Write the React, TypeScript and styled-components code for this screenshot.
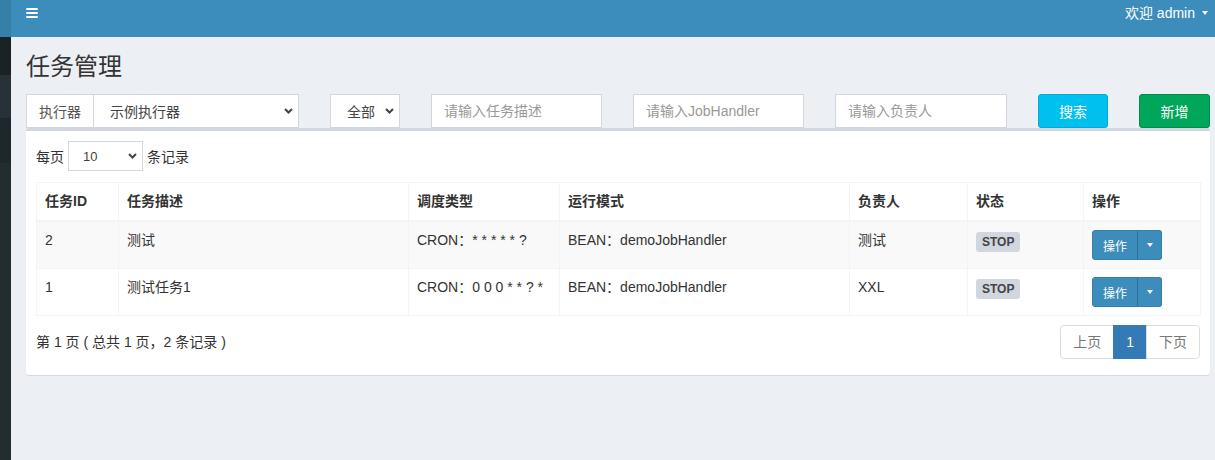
import React from "react";
import styled, { createGlobalStyle } from "styled-components";

const GlobalStyle = createGlobalStyle`
  html, body { margin: 0; padding: 0; }
  body {
    background: #ecf0f5;
    font-family: "Liberation Sans", "Noto Sans CJK SC", sans-serif;
    font-size: 14px;
    color: #333;
  }
  * { box-sizing: border-box; }
`;

const Wrapper = styled.div`
  display: flex;
  min-height: 100vh;
`;

const Sidebar = styled.aside`
  width: 11px;
  flex-shrink: 0;
  display: flex;
  flex-direction: column;
  background: #222d32;
`;

const SideBand = styled.div<{ $h: number; $c: string }>`
  height: ${(p) => p.$h}px;
  background: ${(p) => p.$c};
`;

const Main = styled.div`
  flex: 1;
  display: flex;
  flex-direction: column;
  min-width: 0;
`;

const Navbar = styled.header`
  height: 37px;
  background: #3c8dbc;
  display: flex;
  align-items: flex-start;
  justify-content: space-between;
  padding: 0 7px 0 15px;
  color: #fff;
`;

const Toggle = styled.div`
  display: flex;
  flex-direction: column;
  gap: 2px;
  width: 12px;
  margin-top: 8px;
  span {
    display: block;
    height: 2px;
    background: #fff;
    border-radius: 1px;
  }
`;

const UserMenu = styled.div`
  display: flex;
  align-items: center;
  gap: 7px;
  font-size: 14px;
  line-height: 20px;
  margin-top: 3px;
`;

const Caret = styled.span<{ $color?: string }>`
  display: inline-block;
  width: 0;
  height: 0;
  border-top: 4px solid ${(p) => p.$color || "#fff"};
  border-left: 3px solid transparent;
  border-right: 3px solid transparent;
`;

const Content = styled.main`
  padding: 17px 5px 0 15px;
`;

const Title = styled.h1`
  margin: 0 0 14px;
  font-size: 24px;
  font-weight: 400;
  line-height: 26px;
  color: #333;
`;

const FilterRow = styled.div`
  display: flex;
  gap: 31px;
  height: 34px;
`;

const InputGroup = styled.div<{ $w: number }>`
  display: flex;
  width: ${(p) => p.$w}px;
`;

const Addon = styled.div`
  width: 67px;
  height: 34px;
  border: 1px solid #d2d6de;
  border-right: none;
  background: #fff;
  color: #555;
  display: flex;
  align-items: center;
  justify-content: center;
  font-size: 14px;
`;

const SelectBox = styled.div<{ $w?: number; $h?: number; $pl?: number }>`
  ${(p) => (p.$w ? `width: ${p.$w}px;` : "flex: 1;")}
  height: ${(p) => p.$h || 34}px;
  border: 1px solid #d2d6de;
  background: #fff;
  color: #444;
  display: flex;
  align-items: center;
  justify-content: space-between;
  padding: 0 5px 0 ${(p) => p.$pl ?? 16}px;
  font-size: ${(p) => (p.$h && p.$h < 34 ? 13 : 14)}px;
`;

const TextInput = styled.input<{ $w: number }>`
  width: ${(p) => p.$w}px;
  height: 34px;
  border: 1px solid #d2d6de;
  background: #fff;
  padding: 0 12px;
  font-family: inherit;
  font-size: 14px;
  color: #555;
  outline: none;
  &::placeholder { color: #999; }
`;

const Button = styled.button<{ $bg: string; $border: string; $w?: number }>`
  width: ${(p) => p.$w || 70}px;
  height: 34px;
  border: 1px solid ${(p) => p.$border};
  border-radius: 3px;
  background: ${(p) => p.$bg};
  color: #fff;
  font-family: inherit;
  font-size: 14px;
  padding: 0;
  cursor: pointer;
`;

const Box = styled.section`
  background: #fff;
  border-top: 3px solid #d2d6de;
  border-radius: 3px;
  box-shadow: 0 1px 1px rgba(0, 0, 0, 0.1);
  padding: 10px 10px 16px;
`;

const LengthRow = styled.div`
  display: flex;
  align-items: center;
  gap: 4px;
  height: 30px;
  font-size: 14px;
  color: #333;
`;

const Table = styled.table`
  width: 100%;
  margin-top: 11px;
  border-collapse: collapse;
  table-layout: fixed;
  border: 1px solid #f4f4f4;
  font-size: 14px;
`;

const Th = styled.th<{ $w: number }>`
  width: ${(p) => p.$w}px;
  text-align: left;
  font-weight: 700;
  padding: 8px 8px 9px;
  line-height: 20px;
  border: 1px solid #f4f4f4;
  border-bottom-width: 2px;
  color: #333;
`;

const Tr = styled.tr<{ $striped?: boolean }>`
  background: ${(p) => (p.$striped ? "#f9f9f9" : "#fff")};
`;

const Td = styled.td`
  padding: 8px;
  line-height: 20px;
  vertical-align: top;
  border: 1px solid #f4f4f4;
  color: #333;
  white-space: nowrap;
`;

const Label = styled.span`
  display: inline-block;
  margin-top: 2px;
  padding: 4px 6px;
  font-size: 12px;
  line-height: 12px;
  font-weight: 700;
  color: #444;
  background: #d2d6de;
  border-radius: 3px;
`;

const BtnGroup = styled.div`
  display: inline-flex;
  height: 30px;
`;

const ActionBtn = styled.button`
  height: 30px;
  background: #3c8dbc;
  border: 1px solid #367fa9;
  color: #fff;
  font-family: inherit;
  font-size: 12px;
  padding: 0 10px;
  width: 46px;
  border-radius: 3px 0 0 3px;
`;

const CaretBtn = styled.button`
  height: 30px;
  width: 25px;
  background: #3c8dbc;
  border: 1px solid #367fa9;
  border-left-color: #2f6f96;
  border-radius: 0 3px 3px 0;
  display: flex;
  align-items: center;
  justify-content: center;
  padding: 0;
  margin-left: -1px;
`;

const Footer = styled.div`
  display: flex;
  justify-content: space-between;
  align-items: flex-start;
  margin-top: 9px;
`;

const Info = styled.div`
  padding-top: 7px;
  line-height: 20px;
  font-size: 14px;
  color: #333;
`;

const Pager = styled.div`
  display: flex;
`;

const PageItem = styled.span<{ $active?: boolean; $pos?: "first" | "last" }>`
  padding: 6px 12px;
  line-height: 20px;
  font-size: 14px;
  border: 1px solid ${(p) => (p.$active ? "#337ab7" : "#ddd")};
  background: ${(p) => (p.$active ? "#337ab7" : "#fff")};
  color: ${(p) => (p.$active ? "#fff" : "#777")};
  margin-left: ${(p) => (p.$pos === "first" ? 0 : -1)}px;
  border-radius: ${(p) =>
    p.$pos === "first" ? "4px 0 0 4px" : p.$pos === "last" ? "0 4px 4px 0" : "0"};
`;

const Chevron = () => (
  <svg width="9" height="6" viewBox="0 0 9 6">
    <polyline points="1,1 4.5,4.5 8,1" fill="none" stroke="#444" strokeWidth="2" />
  </svg>
);

const columns = [
  { t: "任务ID", w: 82 },
  { t: "任务描述", w: 290 },
  { t: "调度类型", w: 151 },
  { t: "运行模式", w: 290 },
  { t: "负责人", w: 118 },
  { t: "状态", w: 116 },
  { t: "操作", w: 117 },
];

const rows = [
  { id: "2", desc: "测试", cron: "CRON：* * * * * ?", mode: "BEAN：demoJobHandler", owner: "测试" },
  { id: "1", desc: "测试任务1", cron: "CRON：0 0 0 * * ? *", mode: "BEAN：demoJobHandler", owner: "XXL" },
];

export default function App() {
  return (
    <>
      <GlobalStyle />
      <Wrapper>
        <Sidebar>
          <SideBand $h={37} $c="#367fa9" />
          <SideBand $h={38} $c="#1a2226" />
          <SideBand $h={43} $c="#263237" />
          <SideBand $h={45} $c="#1e282c" />
        </Sidebar>
        <Main>
          <Navbar>
            <Toggle>
              <span />
              <span />
              <span />
            </Toggle>
            <UserMenu>
              <span>欢迎 admin</span>
              <Caret />
            </UserMenu>
          </Navbar>
          <Content>
            <Title>任务管理</Title>
            <FilterRow>
              <InputGroup $w={273}>
                <Addon>执行器</Addon>
                <SelectBox>
                  <span>示例执行器</span>
                  <Chevron />
                </SelectBox>
              </InputGroup>
              <SelectBox $w={70}>
                <span>全部</span>
                <Chevron />
              </SelectBox>
              <TextInput $w={171} placeholder="请输入任务描述" />
              <TextInput $w={171} placeholder="请输入JobHandler" />
              <TextInput $w={172} placeholder="请输入负责人" />
              <Button $bg="#00c0ef" $border="#00acd6">搜索</Button>
              <Button $bg="#00a65a" $border="#008d4c" $w={71}>新增</Button>
            </FilterRow>
            <Box>
              <LengthRow>
                <span>每页</span>
                <SelectBox $w={75} $h={30} $pl={14}>
                  <span>10</span>
                  <Chevron />
                </SelectBox>
                <span>条记录</span>
              </LengthRow>
              <Table>
                <thead>
                  <tr>
                    {columns.map((c) => (
                      <Th key={c.t} $w={c.w}>
                        {c.t}
                      </Th>
                    ))}
                  </tr>
                </thead>
                <tbody>
                  {rows.map((r, i) => (
                    <Tr key={r.id} $striped={i === 0}>
                      <Td>{r.id}</Td>
                      <Td>{r.desc}</Td>
                      <Td>{r.cron}</Td>
                      <Td>{r.mode}</Td>
                      <Td>{r.owner}</Td>
                      <Td>
                        <Label>STOP</Label>
                      </Td>
                      <Td>
                        <BtnGroup>
                          <ActionBtn>操作</ActionBtn>
                          <CaretBtn>
                            <Caret />
                          </CaretBtn>
                        </BtnGroup>
                      </Td>
                    </Tr>
                  ))}
                </tbody>
              </Table>
              <Footer>
                <Info>第 1 页 ( 总共 1 页，2 条记录 )</Info>
                <Pager>
                  <PageItem $pos="first">上页</PageItem>
                  <PageItem $active>1</PageItem>
                  <PageItem $pos="last">下页</PageItem>
                </Pager>
              </Footer>
            </Box>
          </Content>
        </Main>
      </Wrapper>
    </>
  );
}
